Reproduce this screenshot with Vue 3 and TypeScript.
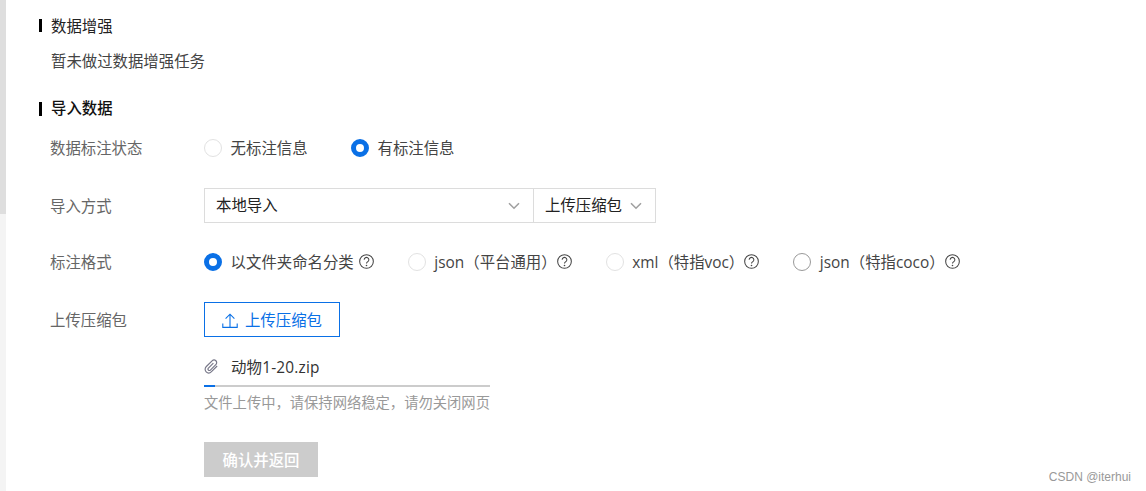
<template>
  <div class="page">
    <div class="scrollbar"><div class="thumb"></div></div>
    <div class="content">
      <h3 class="section-title first">数据增强</h3>
      <p class="empty">暂未做过数据增强任务</p>

      <h3 class="section-title strong">导入数据</h3>

      <div class="row first-row">
        <label class="row-label">数据标注状态</label>
        <div class="radios status">
          <span v-for="o in statusOptions" :key="o" class="radio-item">
            <i class="radio" :class="{ on: o === status }"></i>{{ o }}
          </span>
        </div>
      </div>

      <div class="row tall">
        <label class="row-label">导入方式</label>
        <div class="select-group">
          <div class="select wide">
            <span>本地导入</span>
            <svg class="chevron" viewBox="0 0 12 8"><path d="M1 1.2l5 5 5-5" /></svg>
          </div>
          <div class="select narrow">
            <span>上传压缩包</span>
            <svg class="chevron" viewBox="0 0 12 8"><path d="M1 1.2l5 5 5-5" /></svg>
          </div>
        </div>
      </div>

      <div class="row short">
        <label class="row-label">标注格式</label>
        <div class="radios formats">
          <span v-for="f in formats" :key="f.name" class="radio-item">
            <i class="radio" :class="{ on: f.name === format, dark: f.dark }"></i>{{ f.name }}
            <svg class="help" :class="{ tight: f.name.endsWith('）') }" viewBox="0 0 16 16">
              <circle cx="8" cy="8" r="7.3" />
              <path d="M5.5 6.1a2.5 2.5 0 1 1 3.9 2.1c-.9.6-1.4 1-1.4 2" />
              <circle class="dot" cx="8" cy="12.2" r=".85" />
            </svg>
          </span>
        </div>
      </div>

      <div class="row tall">
        <label class="row-label">上传压缩包</label>
        <button class="btn-upload">
          <svg viewBox="0 0 16 16"><path d="M8 15V2.2M3.6 6.6L8 2.2l4.4 4.4M.8 11.5v3.9h14.4v-3.9" /></svg>
          <span>上传压缩包</span>
        </button>
      </div>

      <div class="upload-info">
        <div class="file-name">
          <svg class="clip" viewBox="0 0 16 16">
            <path d="M14 7.5L8 13.5c-1.7 1.7-4.2 1.7-5.7.2s-1.5-4 .2-5.7L8.6 2c1.2-1.2 3-1.2 4.1-.1s1.1 2.9-.1 4.1L6.8 11.8c-.6.6-1.5.6-2.1 0s-.6-1.5 0-2.1L10 4.4" />
          </svg>
          <span>{{ fileName }}</span>
        </div>
        <div class="progress"><div class="bar" :style="{ width: progress + '%' }"></div></div>
        <p class="hint">文件上传中，请保持网络稳定，请勿关闭网页</p>
        <button class="btn-confirm" disabled>确认并返回</button>
      </div>
    </div>
    <div class="watermark">CSDN @iterhui</div>
  </div>
</template>

<script setup lang="ts">
import { ref } from 'vue'

interface FormatOption {
  name: string
  dark?: boolean
}

const statusOptions = ['无标注信息', '有标注信息']
const status = ref('有标注信息')

const formats: FormatOption[] = [
  { name: '以文件夹命名分类' },
  { name: 'json（平台通用）' },
  { name: 'xml（特指voc）' },
  { name: 'json（特指coco）', dark: true }
]
const format = ref('以文件夹命名分类')

const fileName = ref('动物1-20.zip')
const progress = ref(4)
</script>

<style>
html, body { background: #fff; overflow: hidden; }
</style>

<style scoped>
.page { position: relative; display: flex; height: 491px; overflow: hidden; font-family: "Open Sans", "Noto Sans CJK SC", sans-serif; font-size: 15.4px; color: #333; background: #fff; }
.scrollbar { width: 6px; flex: none; background: #f4f4f4; }
.thumb { height: 214px; background: #dedede; }
.content { flex: 1; padding: 0 0 0 33px; }
.section-title { position: relative; margin: 0; padding-left: 12px; height: 22px; line-height: 24px; font-size: 15.4px; font-weight: 400; color: #222; }
.section-title::before { content: ""; position: absolute; left: 0; top: 4px; width: 3px; height: 13px; background: #000; }
.section-title.first { margin-top: 15px; }
.section-title.strong { font-weight: 500; color: #111; margin-top: 25px; }
.section-title.strong::before { top: 5px; height: 14px; }
.empty { margin: 13px 0 0 12px; height: 22px; line-height: 24px; color: #444; }
.row { display: flex; align-items: center; height: 35px; margin-top: 22px; }
.first-row { margin-top: 11px; }
.tall { margin-top: 23px; }
.short { margin-top: 21px; }
.row-label { width: 154px; padding: 0 0 0 11px; flex: none; color: #666; }
.radios { display: flex; align-items: center; }
.status { gap: 43.4px; }
.formats { gap: 34px; }
.radio-item { display: flex; align-items: center; color: #444; white-space: nowrap; }
.radio { width: 18px; height: 18px; border-radius: 50%; border: 1px solid #e2e2e2; box-sizing: border-box; margin: 0 8.6px 0 0; background: #fff; flex: none; }
.radio.dark { border-color: #999; }
.radio.on { border: 5px solid #0a70e6; }
.help { width: 15px; height: 15px; margin: 0 0 0 5px; flex: none; fill: none; stroke: #444; stroke-width: 1.1; }
.help.tight { margin-left: 0; }
.help .dot { fill: #444; stroke: none; }
.select-group { display: flex; height: 35px; box-sizing: border-box; border: 1px solid #dcdcdc; color: #222; }
.select { display: flex; align-items: center; justify-content: space-between; box-sizing: border-box; padding: 0 13px 0 11px; }
.select span { padding-bottom: 2px; }
.wide { width: 329px; border-right: 1px solid #dcdcdc; }
.narrow { width: 121px; }
.chevron { width: 12px; height: 8px; fill: none; stroke: #a0a0a0; stroke-width: 1.6; }
.btn-upload { display: flex; align-items: center; justify-content: center; gap: 7px; width: 136px; height: 35px; padding: 0; border: 1px solid #0a70e6; background: #fff; color: #0a70e6; font: inherit; cursor: pointer; }
.btn-upload svg { width: 16px; height: 16px; fill: none; stroke: #0a70e6; stroke-width: 1.1; }
.upload-info { margin-left: 165px; width: 286px; }
.file-name { display: flex; align-items: center; margin-top: 18px; height: 22px; color: #333; letter-spacing: .2px; }
.clip { width: 15px; height: 15px; margin-right: 12px; flex: none; fill: none; stroke: #778; stroke-width: 1.25; }
.progress { height: 2px; margin-top: 8px; background: #ccc; }
.bar { height: 100%; background: #0a70e6; }
.hint { margin: 4px 0 0; height: 22px; line-height: 24px; font-size: 14.3px; color: #999; white-space: nowrap; }
.btn-confirm { display: block; margin-top: 29px; width: 114px; height: 35px; padding: 0; border: none; background: #ccc; color: #fff; font: inherit; font-weight: 500; }
.watermark { position: absolute; right: 15px; bottom: 7px; font-family: "Liberation Sans", sans-serif; font-size: 12px; color: #999; }
</style>
